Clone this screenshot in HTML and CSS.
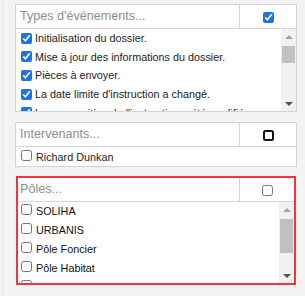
FILE: index.html
```html
<!DOCTYPE html>
<html lang="fr">
<head>
  <meta charset="UTF-8">
  <meta name="viewport" content="width=device-width, initial-scale=1">
  <title>Filtres</title>
  <link rel="stylesheet" href="styles.css">
</head>
<body>
  <div class="page">
    <!-- Types d'événements -->
    <div class="filter filter-events">
      <div class="filter-head">
        <input class="filter-search" type="text" placeholder="Types d'événements...">
        <div class="filter-all"><input type="checkbox" checked></div>
      </div>
      <div class="filter-body">
        <div class="filter-list">
          <label class="filter-item"><input type="checkbox" checked><span>Initialisation du dossier.</span></label>
          <label class="filter-item"><input type="checkbox" checked><span>Mise à jour des informations du dossier.</span></label>
          <label class="filter-item"><input type="checkbox" checked><span>Pièces à envoyer.</span></label>
          <label class="filter-item"><input type="checkbox" checked><span>La date limite d'instruction a changé.</span></label>
          <label class="filter-item"><input type="checkbox" checked><span>La composition de l'instruction a été modifiée.</span></label>
          <label class="filter-item"><input type="checkbox" checked><span>Nouveau commentaire.</span></label>
          <label class="filter-item"><input type="checkbox" checked><span>Nouvelle pièce jointe.</span></label>
        </div>
        <div class="scrollbar">
          <div class="sb-btn sb-up"></div>
          <div class="sb-track"><div class="sb-thumb"></div></div>
          <div class="sb-btn sb-down"></div>
        </div>
      </div>
    </div>

    <!-- Intervenants -->
    <div class="filter filter-people">
      <div class="filter-head">
        <input class="filter-search" type="text" placeholder="Intervenants...">
        <div class="filter-all"><input class="check-dark" type="checkbox"></div>
      </div>
      <div class="filter-rows">
        <label class="filter-item"><input type="checkbox"><span>Richard Dunkan</span></label>
      </div>
    </div>

    <!-- Pôles (champ en erreur) -->
    <div class="filter filter-poles">
      <div class="filter-head">
        <input class="filter-search" type="text" placeholder="Pôles...">
        <div class="filter-all"><input type="checkbox"></div>
      </div>
      <div class="filter-body">
        <div class="filter-list">
          <label class="filter-item"><input type="checkbox"><span>SOLIHA</span></label>
          <label class="filter-item"><input type="checkbox"><span>URBANIS</span></label>
          <label class="filter-item"><input type="checkbox"><span>Pôle Foncier</span></label>
          <label class="filter-item"><input type="checkbox"><span>Pôle Habitat</span></label>
          <label class="filter-item"><input type="checkbox"><span>Pôle PDE</span></label>
        </div>
        <div class="scrollbar">
          <div class="sb-btn sb-up"></div>
          <div class="sb-track"><div class="sb-thumb"></div></div>
          <div class="sb-btn sb-down"></div>
        </div>
      </div>
    </div>
  </div>
</body>
</html>
```

FILE: styles.css
```css
/* Page */
* {
  box-sizing: border-box;
}
body {
  margin: 0;
  background: #f3f3f3;
  font-family: "Liberation Sans", Arial, sans-serif;
  color: #222;
}
.page {
  margin-left: 2px;
  border-left: 1px solid #e8e8e8;
  min-height: 100vh;
  padding: 4px 8px 0 12px;
}

/* Bloc de filtre */
.filter {
  background: #fff;
  border: 1px solid #d1d5db;
}
.filter-events {
  margin-bottom: 10px;
}
.filter-people {
  margin-bottom: 9px;
}
.filter-poles {
  width: 280px;
  margin-left: 1px;
  border: 2px solid #f5333b;
}

/* En-tête : recherche + tout cocher */
.filter-head {
  display: flex;
  height: 24px;
  border-bottom: 1px solid #d1d5db;
}
.filter-search {
  flex: 1;
  min-width: 0;
  border: 0;
  border-right: 1px solid #d1d5db;
  padding: 0 0 0 4px;
  font: 12.6px "Liberation Sans", Arial, sans-serif;
  line-height: 23px;
  color: #222;
  background: transparent;
  outline: none;
}
.filter-search::placeholder {
  color: #8e8e8e;
}
.filter-poles .filter-search {
  padding-left: 2px;
}
.filter-all {
  width: 56px;
  display: flex;
  align-items: center;
  justify-content: center;
  padding-top: 1px;
}
.filter-poles .filter-all {
  width: 54px;
}

/* Cases à cocher */
input[type="checkbox"] {
  width: 11px;
  height: 11px;
  margin: 0;
  accent-color: #1a73e8;
}
.check-dark {
  appearance: none;
  border: 2.5px solid #151515;
  border-radius: 2.5px;
  background: #fff;
}

/* Listes avec barre de défilement */
.filter-body {
  display: flex;
  height: 82px;
}
.filter-poles .filter-body {
  height: 81px;
}
.filter-list {
  flex: 1;
  min-width: 0;
  overflow: hidden;
}
.scrollbar {
  width: 15px;
  display: flex;
  flex-direction: column;
  background: #f1f1f1;
}
.sb-btn {
  height: 15px;
  display: flex;
  align-items: center;
  justify-content: center;
}
.sb-btn::before {
  content: "";
  border-left: 4px solid transparent;
  border-right: 4px solid transparent;
}
.sb-up::before {
  border-bottom: 4px solid #a3a3a3;
}
.sb-down::before {
  border-top: 4px solid #505050;
}
.sb-track {
  flex: 1;
  padding: 2px 1px 0;
}
.sb-thumb {
  height: 17px;
  background: #c1c1c1;
}
.filter-poles .sb-thumb {
  height: 34px;
}

/* Lignes */
.filter-item {
  display: flex;
  align-items: center;
  height: 18.6px;
  padding-left: 5px;
  font-size: 10.8px;
  white-space: nowrap;
}
.filter-item input {
  margin-right: 3px;
  flex: none;
}
.filter-rows .filter-item {
  height: 19px;
}
.filter-rows .filter-item input {
  margin-right: 4px;
  margin-top: -2px;
}
.filter-poles .filter-item {
  align-items: flex-start;
  height: 19px;
  line-height: 19px;
  padding-left: 3px;
  color: #111;
}
.filter-poles .filter-item input {
  margin-top: 1.5px;
  margin-right: 4px;
}
```
